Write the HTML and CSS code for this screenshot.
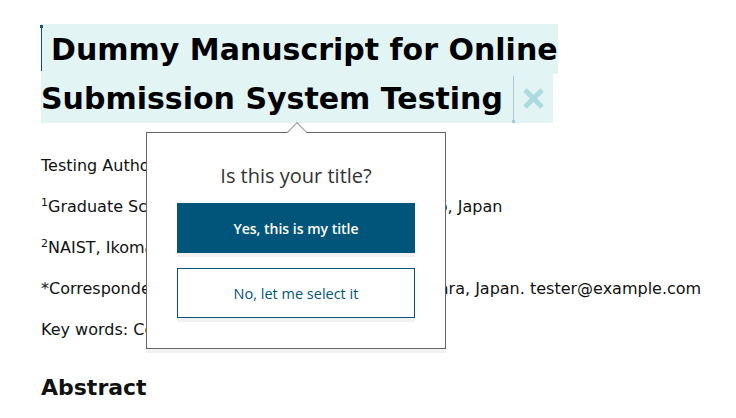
FILE: index.html
```html
<!DOCTYPE html>
<html lang="en">
<head>
  <meta charset="UTF-8" />
  <meta name="viewport" content="width=device-width, initial-scale=1.0"/>
  <title>Manuscript Title Check</title>
  <link rel="stylesheet" href="styles.css">
</head>
<body>

  <div class="page">
    <h1 class="title">
      <span class="title-line first"><span class="caret start"></span>Dummy Manuscript for Online</span>
      <span class="title-line second">Submission System Testing<span class="caret end"></span><button class="clear-btn" title="Clear selection">
        <svg width="23" height="23" viewBox="0 0 23 23"><path d="M3 3 L20 20 M20 3 L3 20" stroke="#acdadf" stroke-width="5" fill="none"/></svg>
      </button></span>
    </h1>

    <p>Testing Author<sup>1</sup>*, Second Author<sup>2</sup></p>
    <p><sup>1</sup>Graduate School of Pharmacy, University of Tokyo, Japan</p>
    <p><sup>2</sup>NAIST, Ikoma, Nara, Japan</p>
    <p>*Correspondence: Testing Author, NAIST Ikoma, Nara, Japan. tester@example.com</p>
    <p>Key words: Cell biology, Testing, Submission</p>

    <h2>Abstract</h2>

    <div class="popover">
      <div class="popover-title">Is this your title?</div>
      <button class="btn btn-yes">Yes, this is my title</button>
      <button class="btn btn-no">No, let me select it</button>
    </div>
  </div>

</body>
</html>
```

FILE: styles.css
```css
body {
  margin: 0;
  font-family: "DejaVu Sans", Verdana, sans-serif;
  color: #111;
  background-color: #fff;
}

.page {
  position: relative;
  padding: 24px 20px 0 41px;
}

.title {
  margin: 0;
  font-size: 30px;
  font-weight: bold;
  color: #000;
}

.title-line {
  display: flex;
  align-items: center;
  width: fit-content;
  background-color: #e3f4f5;
  height: 50px;
}

.title-line.second {
  height: 49px;
}

.caret {
  position: relative;
  display: inline-block;
  width: 1px;
  background-color: #0d5677;
}

.caret.start {
  height: 46px;
  margin-right: 9px;
  align-self: flex-start;
  margin-top: 1px;
}

.caret.start::before {
  content: "";
  position: absolute;
  top: 0;
  left: -1px;
  width: 3px;
  height: 3px;
  background-color: #0d5677;
}

.caret.end {
  height: 47px;
  margin-left: 10px;
  background-color: #a7c9cf;
  align-self: flex-end;
}

.caret.end::after {
  content: "";
  position: absolute;
  bottom: 0;
  left: -1px;
  width: 3px;
  height: 3px;
  background-color: #a7c9cf;
}

.clear-btn {
  display: flex;
  background: none;
  border: none;
  padding: 0;
  margin: 0 8px 0 8px;
  cursor: pointer;
}

p {
  margin: 16px 0;
  font-size: 16px;
  line-height: 25px;
}

.page > p:first-of-type {
  margin-top: 30px;
}

sup {
  font-size: 11px;
  vertical-align: 6px;
  line-height: 0;
}

h2 {
  margin: 32px 0 0 0;
  font-size: 22px;
  line-height: 28px;
  font-weight: bold;
}

.popover {
  position: absolute;
  left: 146px;
  top: 132px;
  width: 238px;
  height: 215px;
  padding: 0 30px;
  background-color: #fff;
  border: 1px solid #666;
  box-shadow: 0 4px 0 #f1f1f1;
  display: flex;
  flex-direction: column;
  font-family: "Open Sans", Arial, sans-serif;
}

.popover::before {
  content: "";
  position: absolute;
  top: -8px;
  left: 143px;
  width: 13px;
  height: 13px;
  background-color: #fff;
  border-left: 1px solid #999;
  border-top: 1px solid #999;
  transform: rotate(45deg);
}

.popover-title {
  margin-top: 29px;
  height: 41px;
  text-align: center;
  font-size: 20px;
  color: #333;
}

.btn {
  height: 50px;
  font-family: "Open Sans", Arial, sans-serif;
  font-size: 14px;
  box-shadow: 0 4px 0 #f1f1f1;
  cursor: pointer;
}

.btn-yes {
  background-color: #01557a;
  color: #fff;
  border: none;
  font-weight: 600;
}

.btn-no {
  margin-top: 15px;
  background-color: #fff;
  color: #01557a;
  border: 1px solid #01557a;
  font-size: 14.5px;
  font-weight: 500;
}
```
